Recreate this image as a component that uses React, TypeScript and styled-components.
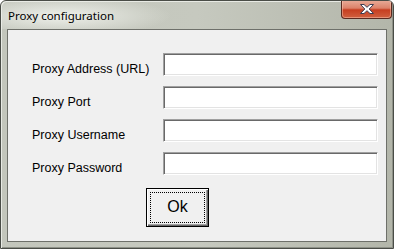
import React from 'react'
import styled, { createGlobalStyle } from 'styled-components'

const GlobalStyle = createGlobalStyle`
  html, body {
    margin: 0;
    padding: 0;
    background: #ffffff;
  }
  #root {
    width: 394px;
    height: 249px;
  }
`

const Window = styled.div`
  box-sizing: border-box;
  width: 394px;
  height: 249px;
  display: flex;
  flex-direction: column;
  border: 1px solid #4a4d47;
  border-radius: 6px 6px 0 0;
  background: linear-gradient(90deg, #c3c6bc 0%, #c6c9bf 50%, #b3b6aa 100%);
  box-shadow: inset 1px 1px 0 #e8eae4, inset -1px -1px 0 #8e9188;
  overflow: hidden;
`

const TitleBar = styled.div`
  height: 28px;
  display: flex;
  align-items: flex-start;
  justify-content: space-between;
  background: radial-gradient(ellipse 110px 20px at 60px 15px, #eef0ea 0%, rgba(236, 238, 232, 0) 100%);
`

const Title = styled.span`
  margin: 7px 0 0 7px;
  font-family: 'Noto Sans', sans-serif;
  font-size: 11.5px;
  color: #000000;
`

const CloseButton = styled.button`
  box-sizing: border-box;
  width: 51px;
  height: 19px;
  margin: -1px 1px 0 0;
  padding: 0;
  display: flex;
  align-items: center;
  justify-content: center;
  border: 1px solid #5a2a20;
  border-top: none;
  border-radius: 0 0 4px 4px;
  background: linear-gradient(180deg, #e9ad9a 0%, #dc826a 45%, #c63e20 55%, #d0603f 100%);
  box-shadow: inset 0 0 0 1px rgba(255, 210, 190, 0.45);
`

const Body = styled.div`
  flex: 1;
  display: flex;
  padding: 0 6px 6px 6px;
`

const Client = styled.div`
  flex: 1;
  box-sizing: border-box;
  border: 1px solid #6e706a;
  background: #f0f0f0;
  padding: 23px 0 0 24px;
`

const Form = styled.div`
  display: grid;
  grid-template-columns: 131px 215px;
  row-gap: 9px;
  align-items: start;
`

const Label = styled.label`
  font-family: 'Liberation Sans', Arial, sans-serif;
  font-size: 12.5px;
  line-height: 15px;
  color: #000000;
  padding-top: 9px;
`

const Input = styled.input`
  box-sizing: border-box;
  width: 215px;
  height: 23px;
  margin: 0;
  padding: 2px 4px;
  border-style: solid;
  border-width: 1px;
  border-color: #a0a0a0 #ffffff #ffffff #a0a0a0;
  box-shadow: inset 1px 1px 0 #696969, inset -1px -1px 0 #e3e3e3;
  background: #ffffff;
  font-family: 'Liberation Sans', Arial, sans-serif;
  font-size: 13px;
  outline: none;
`

const ButtonRow = styled.div`
  padding: 12px 0 0 114px;
`

const OkButton = styled.button`
  box-sizing: border-box;
  width: 63px;
  height: 39px;
  padding: 3px;
  border: 1px solid #000000;
  background: #f0f0f0;
  box-shadow: inset 1px 1px 0 #ffffff, inset -1px -1px 0 #696969, inset -2px -2px 0 #a0a0a0;
  font-family: 'Liberation Sans', Arial, sans-serif;
  font-size: 16px;
  color: #000000;
  cursor: pointer;
`

const Focus = styled.span`
  box-sizing: border-box;
  display: flex;
  align-items: center;
  justify-content: center;
  width: 100%;
  height: 100%;
  border: 1px dotted #000000;
  padding-bottom: 1px;
`

const fields = ['Proxy Address (URL)', 'Proxy Port', 'Proxy Username', 'Proxy Password']

const CloseGlyph = () => (
  <svg width="16" height="12" viewBox="0 0 16 12">
    <path
      d="M1.5 1.5 L5 1.5 L8 4.3 L11 1.5 L14.5 1.5 L10.2 6 L14.5 10.5 L11 10.5 L8 7.7 L5 10.5 L1.5 10.5 L5.8 6 Z"
      fill="#ffffff"
      stroke="#3d3d52"
      strokeWidth="1"
      strokeLinejoin="round"
    />
  </svg>
)

const App = () => {
  return (
    <>
      <GlobalStyle />
      <Window>
        <TitleBar>
          <Title>Proxy configuration</Title>
          <CloseButton aria-label='Close'>
            <CloseGlyph />
          </CloseButton>
        </TitleBar>
        <Body>
          <Client>
            <Form>
              {fields.map((f) => (
                <React.Fragment key={f}>
                  <Label>{f}</Label>
                  <Input type={f === 'Proxy Password' ? 'password' : 'text'} />
                </React.Fragment>
              ))}
            </Form>
            <ButtonRow>
              <OkButton>
                <Focus>Ok</Focus>
              </OkButton>
            </ButtonRow>
          </Client>
        </Body>
      </Window>
    </>
  )
}

export default App
